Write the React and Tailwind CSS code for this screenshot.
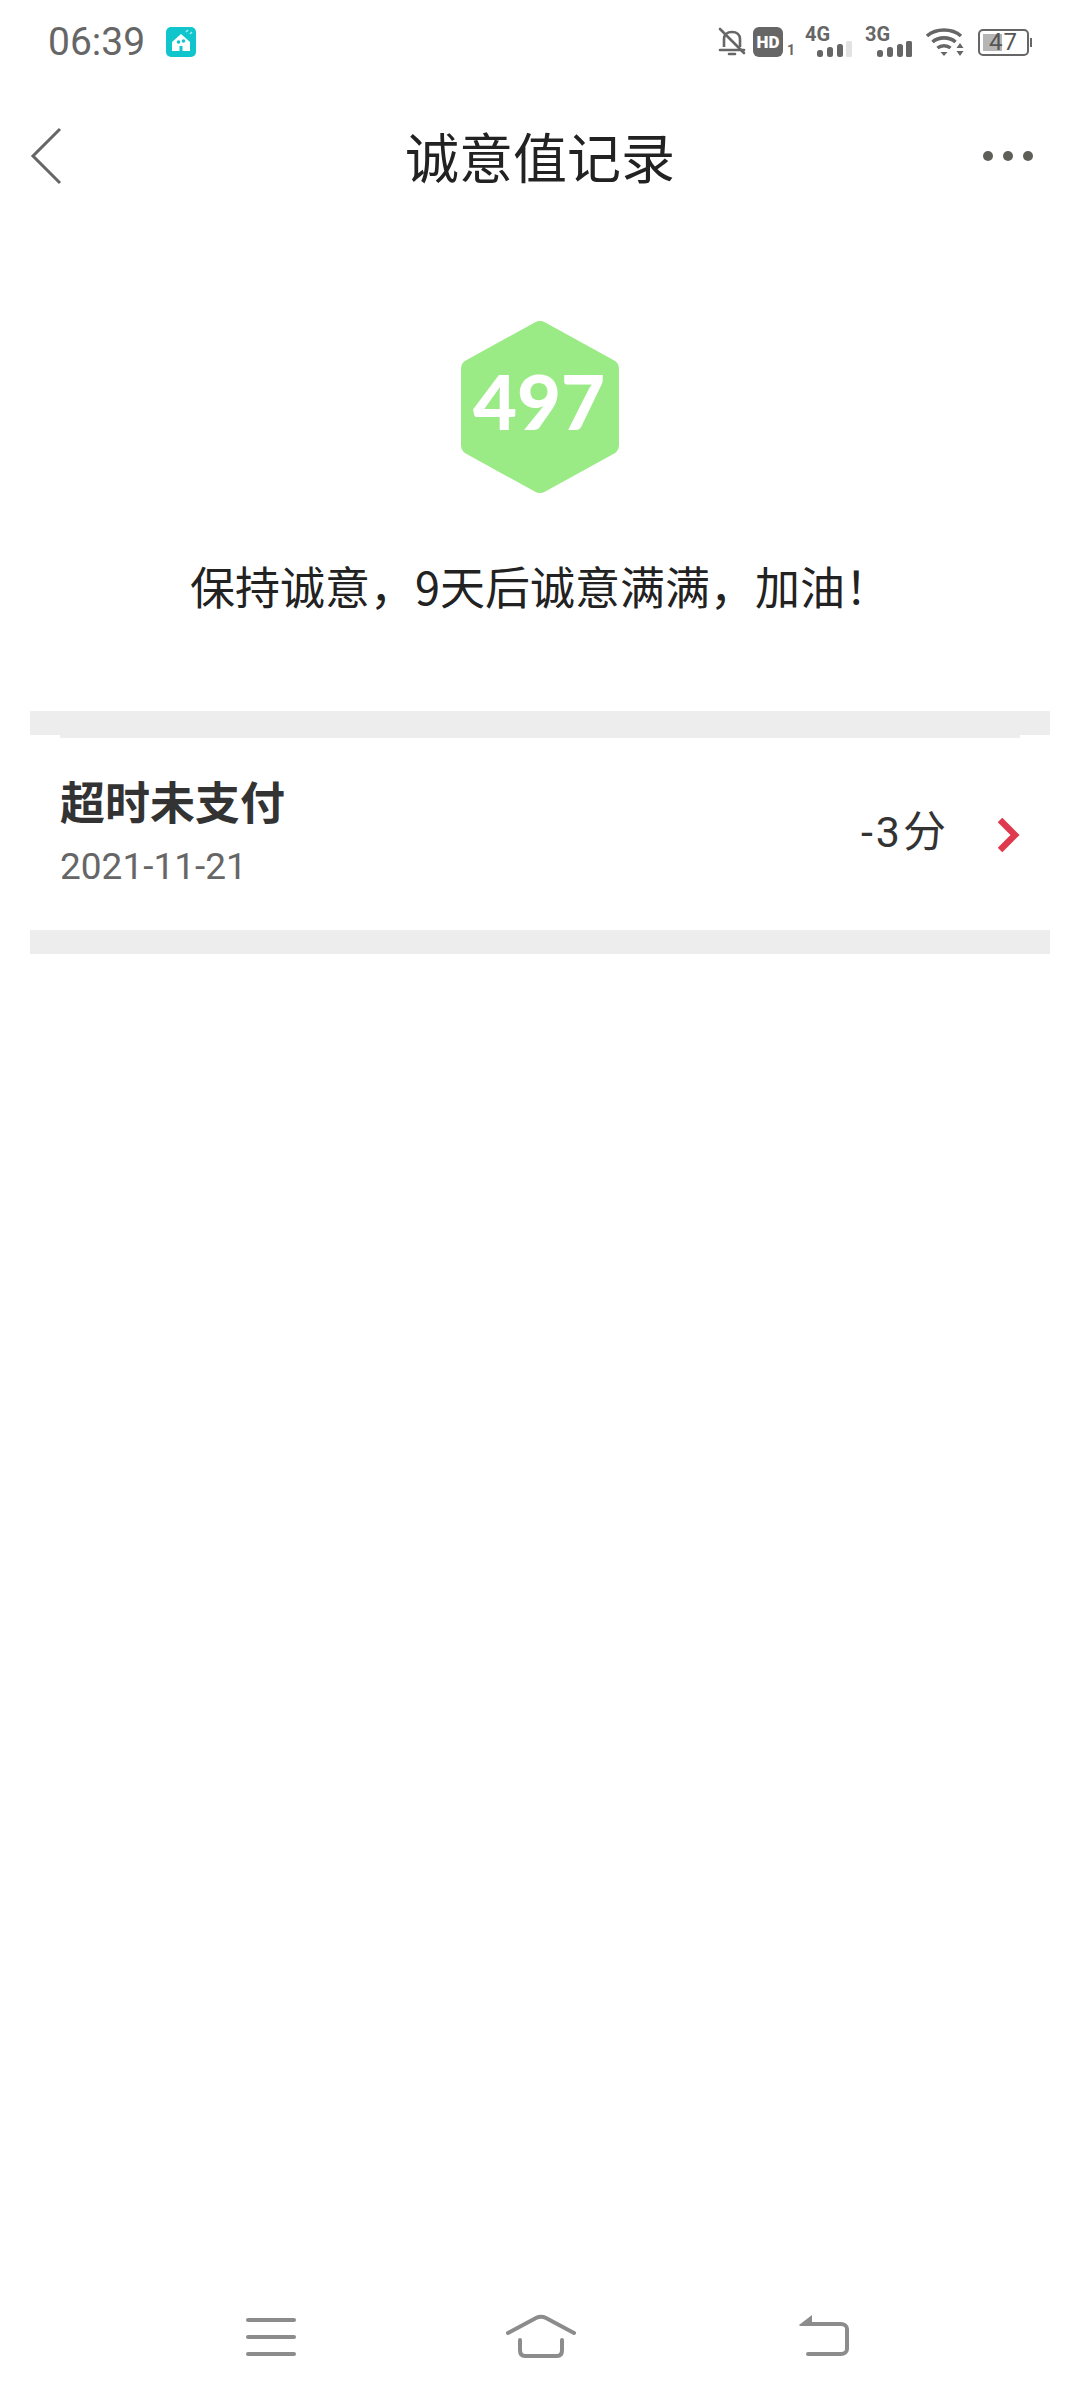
const cjk = { fontFamily: '"Noto Sans CJK SC", "Noto Sans", sans-serif' };

const Bell = () => (
  <svg width="28" height="30" viewBox="0 0 28 30" fill="none" stroke="#666" strokeWidth="2.6">
    <path d="M6 20V12c0-4 3-7 8-7s8 3 8 7v8" />
    <path d="M2 23h24" strokeLinecap="round" />
    <path d="M11 27h6" strokeLinecap="round" />
    <path d="M2 2l24 24" strokeLinecap="round" />
  </svg>
);

const Hd = () => (
  <div className="flex items-end">
    <div className="w-[30px] h-[30px] rounded-[6px] bg-[#666] flex items-center justify-center text-white text-[17px] font-black leading-none" style={{ fontFamily: 'Roboto, sans-serif' }}>HD</div>
    <span className="ml-[4px] text-[#666] text-[14px] font-bold leading-[13px]" style={{ fontFamily: 'Roboto, sans-serif' }}>1</span>
  </div>
);

const Signal = ({ label, last }) => (
  <div className="relative w-[48px] h-[30px]">
    <span className="absolute left-0 top-[-2px] text-[#666] text-[20px] font-bold leading-[18px]" style={{ fontFamily: 'Roboto, sans-serif' }}>{label}</span>
    <svg className="absolute left-[12px] top-0" width="36" height="30" viewBox="0 0 36 30">
      <rect x="0" y="23" width="6" height="7" rx="2.5" fill="#666" />
      <rect x="10" y="20" width="6" height="10" rx="2.5" fill="#666" />
      <rect x="20" y="17" width="6" height="13" rx="2.5" fill="#666" />
      <rect x="29" y="14" width="6" height="16" rx="1.5" fill={last} />
    </svg>
  </div>
);

const Wifi = () => (
  <svg width="38" height="28" viewBox="0 0 38 28" fill="none">
    <path d="M1 8c9-8 25-8 34 0" stroke="#666" strokeWidth="3.6" />
    <path d="M6.5 14c6-5.500 17-5.500 23 0" stroke="#666" strokeWidth="3.6" />
    <path d="M11.500 20c3.500-3 9.500-3 13 0" stroke="#666" strokeWidth="3.6" />
    <path d="M14.500 24h7L18 28z" fill="#666" />
    <path d="M34 15l3.500 5h-7zM30.500 23h7L34 28z" fill="#666" />
  </svg>
);

const Battery = () => (
  <div className="flex items-center">
    <div className="relative w-[51px] h-[27px] rounded-[5px] border-[2px] border-[#666] flex items-center justify-center overflow-hidden">
      <div className="absolute left-[3px] top-[3px] bottom-[3px] w-[19px] bg-[#b5b5b5]" />
      <span className="relative text-[#555] text-[24px] leading-none tracking-[1px]" style={{ fontFamily: 'Roboto, sans-serif' }}>47</span>
    </div>
    <div className="w-[2px] h-[9px] ml-[1px] bg-[#666]" />
  </div>
);

const AppIcon = () => (
  <svg width="30" height="30" viewBox="0 0 30 30">
    <rect width="30" height="30" rx="5" fill="#10c6cc" />
    <path d="M6 15l9-8 9 8v9H6z" fill="#fff" />
    <circle cx="12.500" cy="15" r="1.800" fill="#10c6cc" />
    <circle cx="17.500" cy="14" r="1.800" fill="#10c6cc" />
    <path d="M13.500 24v-5h3v5z" fill="#10c6cc" />
    <path d="M20 5l2-2M24 7l2-2" stroke="#a8ecee" strokeWidth="1.500" />
  </svg>
);

const StatusBar = () => (
  <div className="h-[30px] mt-[27px] pl-[48px] pr-[48px] flex items-center justify-between">
    <div className="flex items-center">
      <span className="text-[39px] leading-none text-[#666] w-[118px]" style={{ fontFamily: 'Roboto, sans-serif' }}>06:39</span>
      <AppIcon />
    </div>
    <div className="flex items-center">
      <Bell />
      <div className="ml-[7px]"><Hd /></div>
      <div className="ml-[10px]"><Signal label="4G" last="#e2e2e2" /></div>
      <div className="ml-[12px]"><Signal label="3G" last="#666" /></div>
      <div className="ml-[13px]"><Wifi /></div>
      <div className="ml-[14px]"><Battery /></div>
    </div>
  </div>
);

const Header = () => (
  <div className="relative h-[100px] mt-[37px] flex items-center justify-center">
    <svg className="absolute left-[30px] top-[33px]" width="32" height="58" viewBox="0 0 32 58" fill="none" stroke="#666" strokeWidth="3">
      <path d="M30 2L3 29l27 27" />
    </svg>
    <h1 className="text-[54px] leading-none text-[#222] font-normal translate-y-[12px]" style={cjk}>诚意值记录</h1>
    <div className="absolute right-[47px] top-[57px] flex gap-[10px]">
      <span className="w-[10px] h-[10px] rounded-full bg-[#5f5f5a]" />
      <span className="w-[10px] h-[10px] rounded-full bg-[#5f5f5a]" />
      <span className="w-[10px] h-[10px] rounded-full bg-[#5f5f5a]" />
    </div>
  </div>
);

const Badge = () => (
  <div className="grid mx-auto mt-[126px] w-[160px] h-[174px] place-items-center">
    <svg className="col-start-1 row-start-1" width="160" height="174" viewBox="0 0 160 174">
      <path d="M80 11L149 49v76L80 163 11 125V49z" fill="#9aeb85" stroke="#9aeb85" strokeWidth="20" strokeLinejoin="round" />
    </svg>
    <span className="col-start-1 row-start-1 text-white text-[76px] font-black leading-none -translate-y-[6px] -translate-x-[1px]" style={{ fontFamily: 'Lato, sans-serif' }}>497</span>
  </div>
);

const Nav = () => (
  <div className="mt-auto h-[100px] flex pl-[246px] pt-[14px]">
    <div className="flex flex-col gap-[13px] pt-[4px]">
      <div className="w-[50px] h-[4px] rounded-full bg-[#8c8c8c]" />
      <div className="w-[50px] h-[4px] rounded-full bg-[#8c8c8c]" />
      <div className="w-[50px] h-[4px] rounded-full bg-[#8c8c8c]" />
    </div>
    <svg className="ml-[210px]" width="70" height="44" viewBox="0 0 70 44" fill="none" stroke="#8c8c8c" strokeWidth="4" strokeLinecap="round">
      <path d="M2 19L30 4c3-1.500 7-1.500 10 0l28 15" />
      <path d="M14 26v10c0 4 2 6 5 6h32c3 0 5-2 5-6V26" />
    </svg>
    <svg className="ml-[222px]" width="52" height="44" viewBox="0 0 52 44" fill="none" stroke="#8c8c8c" strokeWidth="4" strokeLinecap="round">
      <path d="M12 10h31c3 0 6 2 6 5v20c0 3-3 5-6 5H10" />
      <path d="M1 11L14 1v11H2z" fill="#8c8c8c" stroke="none" />
    </svg>
  </div>
);

const App = () => {
  return (
    <div className="w-[1080px] h-[2400px] bg-white flex flex-col">
      <StatusBar />
      <Header />
      <Badge />
      <p className="mt-[64px] text-center text-[45px] leading-[56px] text-[#222]" style={cjk}>保持诚意，9天后诚意满满，加油！</p>

      <div className="mt-[97px] mx-[30px]">
        <div className="h-[24px] bg-[#ededed]" />
        <div className="mx-[30px] h-[3px] bg-[#ededed]" />
        <div className="h-[192px] px-[30px] flex items-center justify-between">
          <div>
            <div className="text-[45px] leading-[52px] font-bold text-[#333] -mt-[4px]" style={cjk}>超时未支付</div>
            <div className="text-[37px] leading-[44px] mt-[18px] text-[#666]" style={{ fontFamily: 'Roboto, sans-serif' }}>2021-11-21</div>
          </div>
          <div className="flex items-center -mt-[3px]">
            <span className="text-[43px] leading-none text-[#333] tracking-[3px]" style={{ fontFamily: 'Roboto, "Noto Sans CJK SC", sans-serif' }}>-3分</span>
            <svg className="ml-[49px] mt-[4px]" width="22" height="34" viewBox="0 0 22 34" fill="none" stroke="#e0394f" strokeWidth="6.500">
              <path d="M2 2l15 15L2 32" />
            </svg>
          </div>
        </div>
        <div className="h-[24px] bg-[#ededed]" />
      </div>

      <Nav />
    </div>
  );
};

export default App;
